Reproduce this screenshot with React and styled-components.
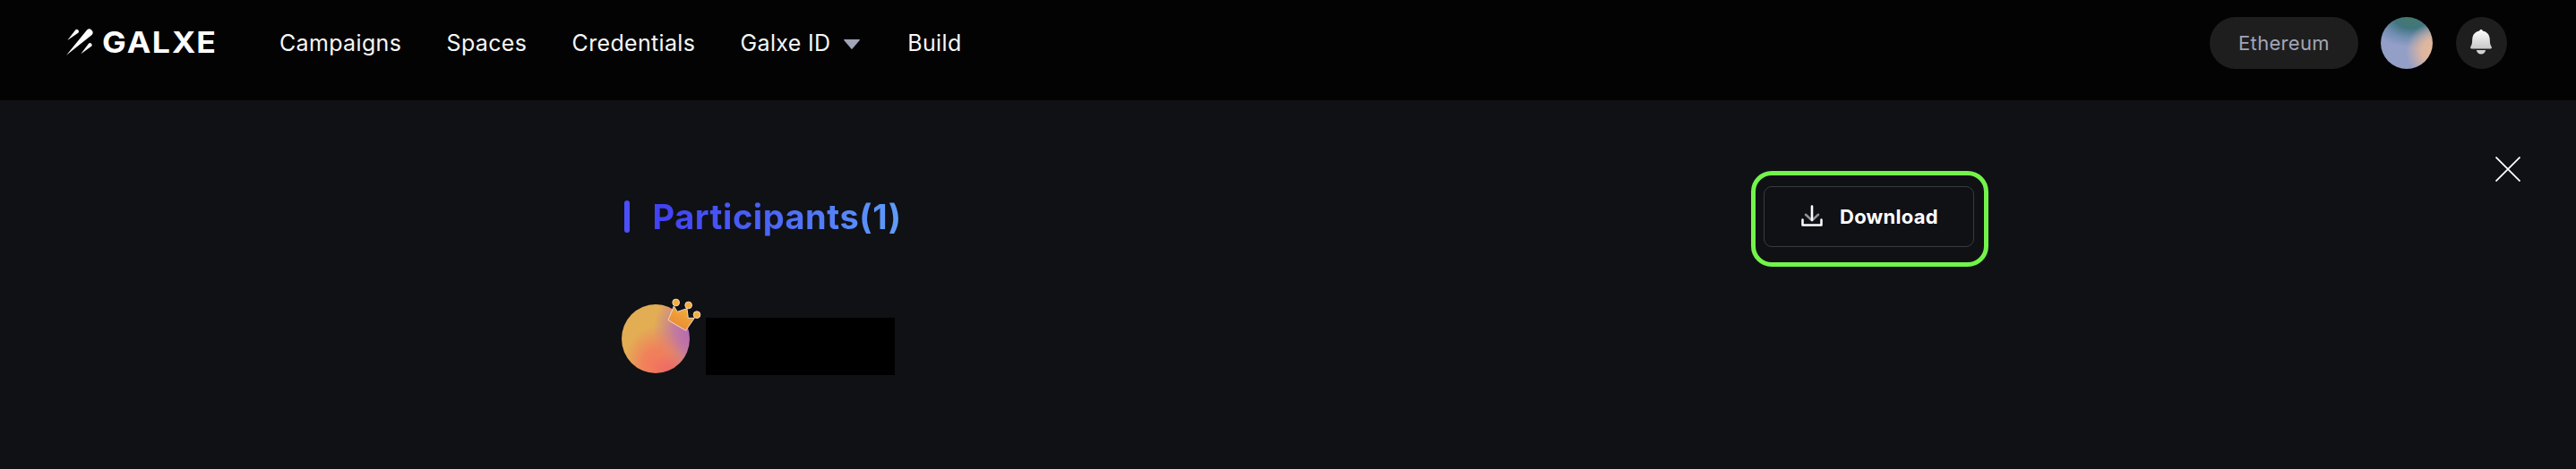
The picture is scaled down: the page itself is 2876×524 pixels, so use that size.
import React from "react";
import styled, { createGlobalStyle } from "styled-components";

const GlobalStyle = createGlobalStyle`
  *, *::before, *::after { box-sizing: border-box; }
  body {
    margin: 0;
    background: #101115;
    color: #fff;
    font-family: Inter, "Liberation Sans", sans-serif;
  }
  button { font-family: inherit; color: inherit; background: none; border: 0; padding: 0; }
`;

const Page = styled.div`
  height: 524px;
  overflow: hidden;
  background: #101115;
`;

const Header = styled.header`
  display: flex;
  align-items: flex-start;
  height: 112px;
  padding: 19px 77px 0 74px;
  background: #030303;
`;

const Logo = styled.svg`
  display: block;
  width: 172px;
  height: 58px;
  fill: #fff;
`;

const LogoText = styled.text`
  font-family: Inter, "Liberation Sans", sans-serif;
  font-size: 33px;
  font-weight: 700;
`;

const Nav = styled.nav`
  display: flex;
  align-items: center;
  gap: 50.3px;
  height: 58px;
  margin-left: 66px;
`;

const NavLink = styled.a`
  display: flex;
  align-items: center;
  color: #f6f6f6;
  font-size: 25px;
  letter-spacing: 0.34px;
  white-space: nowrap;
`;

const Caret = styled.svg`
  width: 18px;
  height: 11px;
  margin: 2px 3px 0 14.5px;
  fill: #a1a5b8;
`;

const Account = styled.div`
  display: flex;
  align-items: center;
  margin-left: auto;
`;

const NetworkPill = styled.button`
  width: 166px;
  height: 58px;
  border-radius: 29px;
  background: #1e1e1e;
  color: #a1a5b6;
  font-size: 22px;
  letter-spacing: 0.32px;
`;

const UserAvatar = styled.div`
  width: 58px;
  height: 58px;
  margin: 0 26px 0 25px;
  border-radius: 50%;
  background:
    radial-gradient(circle at 104% 66%, #e6bb9a 0%, #dcb5a0 20%, rgba(200, 170, 175, 0) 45%),
    radial-gradient(ellipse 84% 58% at 58% 0%, #45796a 0%, #417680 38%, rgba(90, 130, 165, 0.6) 68%, rgba(147, 160, 200, 0) 100%),
    #949fc7;
`;

const BellButton = styled.button`
  display: grid;
  place-items: center;
  width: 57px;
  height: 58px;
  border-radius: 50%;
  background: #1e1e1e;

  svg { display: block; margin: 0 1px 2px 0; }
`;

const Main = styled.main`
  display: flex;
  align-items: flex-start;
  justify-content: space-between;
  padding: 63px 62px 0 694px;
`;

const Panel = styled.section`
  width: 1526px;
  padding-top: 16px;
`;

const PanelHead = styled.div`
  display: flex;
  align-items: flex-start;
  justify-content: space-between;
  padding-left: 3px;
`;

const Title = styled.h1`
  display: flex;
  align-items: center;
  gap: 25.5px;
  height: 36px;
  margin: 33px 0 0;
  font-size: 38px;
  font-weight: 700;
  letter-spacing: 0.55px;

  &::before {
    content: "";
    width: 6px;
    height: 36px;
    border-radius: 3px;
    background: #4b4ffb;
  }
`;

const TitleText = styled.span`
  background: linear-gradient(95deg, #4243f2 5%, #4a63f6 45%, #5f9df9 98%);
  background-clip: text;
  -webkit-background-clip: text;
  color: transparent;
`;

const Highlight = styled.div`
  width: 265px;
  height: 107px;
  padding: 12px 11px 17px 9px;
  border: 5px solid #72f44b;
  border-radius: 23px;
`;

const DownloadButton = styled.button`
  display: flex;
  align-items: center;
  gap: 19.5px;
  width: 235px;
  height: 68px;
  padding: 0 0 0 40.5px;
  border: 1px solid #3a3b3f;
  border-radius: 9px;
  font-size: 22px;
  font-weight: 700;
  letter-spacing: 0.25px;

  svg { display: block; margin-bottom: 3px; }
`;

const Participant = styled.div`
  display: flex;
  align-items: flex-start;
  gap: 18px;
  margin-top: 42px;
`;

const ParticipantAvatar = styled.div`
  position: relative;
  width: 76px;
  height: 77px;
  border-radius: 50%;
  background:
    radial-gradient(circle at 74% 100%, rgba(232, 92, 112, 0.8) 0%, rgba(236, 104, 104, 0) 24%),
    radial-gradient(ellipse 46% 56% at 50% 88%, #f3775c 0%, rgba(242, 122, 92, 0.85) 40%, rgba(238, 145, 88, 0) 100%),
    radial-gradient(ellipse 56% 68% at 102% 42%, #b567b8 0%, rgba(190, 115, 168, 0.85) 45%, rgba(215, 150, 115, 0) 100%),
    #e3ad54;
`;

const Crown = styled.svg`
  position: absolute;
  left: 49.3px;
  top: -6.7px;
  width: 40px;
  height: 38.33px;
  overflow: visible;
`;

const ParticipantName = styled.div`
  width: 211px;
  height: 64px;
  margin-top: 15px;
  background: #000;
`;

const CloseButton = styled.button`
  width: 28px;
  height: 28px;

  svg { display: block; }
`;

const navItems = [
  { label: "Campaigns" },
  { label: "Spaces" },
  { label: "Credentials" },
  { label: "Galxe ID", menu: true },
  { label: "Build" },
];

function GalxeLogo() {
  return (
    <Logo viewBox="0 0 172 58" aria-label="Galxe">
      <path d="M0 42.7L23.05 14.45A3.9 3.9 0 0 1 28.55 19.95Z" />
      <path d="M1.3 26L10.4 14.2A2.3 2.3 0 0 1 13.6 17.4Z" />
      <path d="M16.3 41.3L25.1 29.4A2.3 2.3 0 0 1 28.3 32.6Z" />
      <LogoText transform="translate(40 40.2) scale(1.08 1)" x="0 25.7 51.7 72.2 97.5" y="0">
        GALXE
      </LogoText>
    </Logo>
  );
}

function BellIcon() {
  return (
    <svg width="24" height="28" viewBox="0 0 24 28">
      <defs>
        <linearGradient id="bell" x1="0" y1="0" x2="0" y2="28" gradientUnits="userSpaceOnUse">
          <stop offset="0" stopColor="#ffffff" />
          <stop offset="0.75" stopColor="#c8c8c8" />
          <stop offset="1" stopColor="#c2c2c2" />
        </linearGradient>
      </defs>
      <path
        fill="url(#bell)"
        d="M12 0c1 0 1.7.6 1.9 1.5 4.6 1 7.4 4 7.8 8.6.3 4.6.2 6.4 1.9 9.1.7 1.3.3 2.3-1.1 2.3H1.5C.1 21.5-.3 20.5.4 19.2c1.7-2.7 1.6-4.500 1.900-9.100.4-4.600 3.200-7.600 7.800-8.600C10.300.6 11 0 12 0Z"
      />
      <path fill="#d2d2d2" d="M6.8 23h10.4c-.5 2.7-2.5 4.6-5.2 4.6S7.3 25.7 6.8 23Z" />
    </svg>
  );
}

function DownloadIcon() {
  return (
    <svg width="24" height="24" viewBox="0 0 24 24" fill="none" strokeLinecap="round" strokeLinejoin="round">
      <path d="M5 10.8L12 17.4l7-6.600" stroke="#929396" strokeWidth="2.6" />
      <path d="M12 1.500v15.300" stroke="#fff" strokeWidth="2.600" />
      <path d="M1.500 16.500v6h21v-6" stroke="#fff" strokeWidth="2.500" />
    </svg>
  );
}

function CrownIcon() {
  return (
    <Crown viewBox="190 70 120 115">
      <defs>
        <linearGradient id="crown" x1="260" y1="95" x2="225" y2="165" gradientUnits="userSpaceOnUse">
          <stop offset="0" stopColor="#f3b03c" />
          <stop offset="1" stopColor="#ea8c35" />
        </linearGradient>
      </defs>
      <path
        d="M199 144L218 97L230 116L262 105L266 137L287 137L258 179Z"
        fill="url(#crown)"
        stroke="#f0dcc8"
        strokeWidth="3"
        strokeLinejoin="round"
      />
      <g fill="#f3ae3d" stroke="#f0dcc8" strokeWidth="3">
        <circle cx="225" cy="85" r="11.5" />
        <circle cx="267" cy="94" r="11.5" />
        <circle cx="295" cy="126" r="11.5" />
      </g>
    </Crown>
  );
}

export default function App() {
  return (
    <Page>
      <GlobalStyle />
      <Header>
        <GalxeLogo />
        <Nav>
          {navItems.map((item) => (
            <NavLink key={item.label}>
              {item.label}
              {item.menu && (
                <Caret viewBox="0 0 18 11">
                  <path d="M.6 0h16.8q.9.2.3 1L9.6 10.6q-.6.6-1.2 0L.3 1Q-.3.2.6 0Z" />
                </Caret>
              )}
            </NavLink>
          ))}
        </Nav>
        <Account>
          <NetworkPill>Ethereum</NetworkPill>
          <UserAvatar />
          <BellButton aria-label="Notifications">
            <BellIcon />
          </BellButton>
        </Account>
      </Header>
      <Main>
        <Panel>
          <PanelHead>
            <Title>
              <TitleText>Participants(1)</TitleText>
            </Title>
            <Highlight>
              <DownloadButton>
                <DownloadIcon />
                Download
              </DownloadButton>
            </Highlight>
          </PanelHead>
          <Participant>
            <ParticipantAvatar>
              <CrownIcon />
            </ParticipantAvatar>
            <ParticipantName />
          </Participant>
        </Panel>
        <CloseButton aria-label="Close">
          <svg width="28" height="28" viewBox="0 0 28 28" stroke="#fff" strokeWidth="1.7">
            <path d="M.5.5l27 27M27.5.5l-27 27" />
          </svg>
        </CloseButton>
      </Main>
    </Page>
  );
}
